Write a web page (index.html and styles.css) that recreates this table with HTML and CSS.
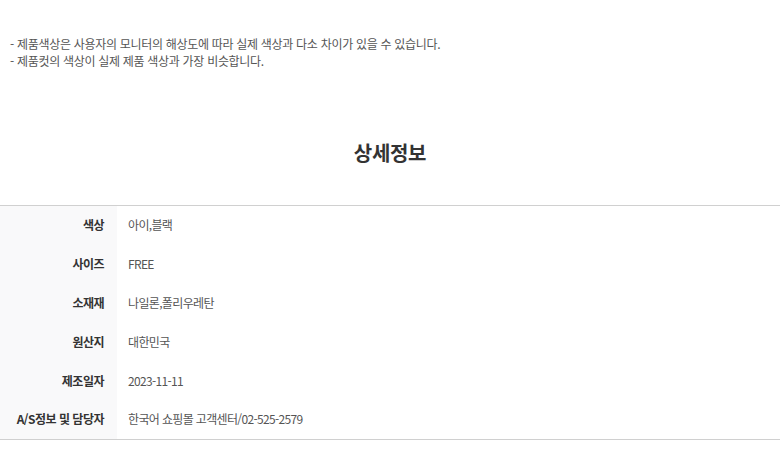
FILE: index.html
```html
<!DOCTYPE html>
<html lang="ko">
<head>
<meta charset="utf-8">
<link rel="stylesheet" href="styles.css">
</head>
<body>
<div class="page">
  <div class="notice">
    <p>- 제품색상은 사용자의 모니터의 해상도에 따라 실제 색상과 다소 차이가 있을 수 있습니다.</p>
    <p>- 제품컷의 색상이 실제 제품 색상과 가장 비슷합니다.</p>
  </div>
  <h2 class="title">상세정보</h2>
  <table class="info">
    <tr><th>색상</th><td>아이,블랙</td></tr>
    <tr><th>사이즈</th><td>FREE</td></tr>
    <tr><th>소재재</th><td>나일론,폴리우레탄</td></tr>
    <tr><th>원산지</th><td>대한민국</td></tr>
    <tr><th>제조일자</th><td>2023-11-11</td></tr>
    <tr><th>A/S정보 및 담당자</th><td>한국어 쇼핑몰 고객센터/02-525-2579</td></tr>
  </table>
</div>
</body>
</html>
```
FILE: styles.css
```css
* { box-sizing: border-box; }
html, body { margin: 0; padding: 0; background: #fff; }
body {
  font-family: "Noto Sans CJK KR", "Noto Sans", sans-serif;
  color: #555;
}
.page { width: 780px; }
.notice {
  padding: 35px 10px 0;
  font-size: 12px;
  line-height: 17px;
  letter-spacing: -0.3px;
  color: #555;
}
.notice p { margin: 0; }
.title {
  margin: 0;
  padding-top: 71px;
  height: 136px;
  text-align: center;
  font-size: 20px;
  font-weight: 700;
  color: #333;
  line-height: 26px;
  letter-spacing: -0.3px;
}
.info {
  width: 100%;
  border-collapse: collapse;
  border-top: 1px solid #d0d0d0;
  border-bottom: 1px solid #d0d0d0;
}
.info th, .info td {
  height: 39px;
  padding: 0 0 2px;
  font-size: 12px;
  letter-spacing: -0.5px;
  vertical-align: middle;
}
.info th {
  width: 117px;
  background: #f9f9fa;
  text-align: right;
  padding-right: 13px;
  font-weight: 700;
  color: #333;
}
.info td {
  padding-left: 11px;
  letter-spacing: -0.65px;
  color: #555;
}
```
